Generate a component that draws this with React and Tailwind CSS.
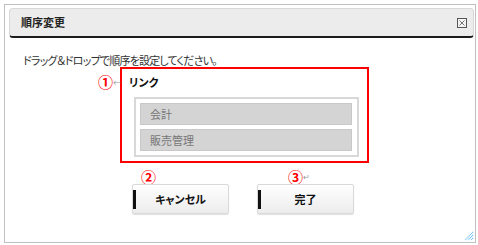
const items = ['会計', '販売管理']

function CloseIcon() {
  return (
    <svg width="10" height="10" viewBox="0 0 10 10" className="block">
      <rect x="0.5" y="0.5" width="9" height="9" fill="#f4f4f4" stroke="#555" />
      <path d="M2.5 2.5 L7.5 7.5 M7.5 2.5 L2.5 7.5" stroke="#666" strokeWidth="0.9" />
    </svg>
  )
}

function Grip() {
  return (
    <svg width="10" height="10" viewBox="0 0 10 10" className="block">
      <path d="M9 1 L1 9 M9 4 L4 9 M9 7 L7 9" stroke="#6cc0f2" strokeWidth="1.2" strokeDasharray="1 0.6" />
    </svg>
  )
}

function Button({ label }) {
  return (
    <button className="relative w-[97px] h-[30px] border border-[#d9d9d9] rounded-[2px] bg-gradient-to-b from-white to-[#ececec] shadow-[0_1px_1px_rgba(0,0,0,0.12)] text-[11px] font-bold text-[#111] flex items-center justify-center">
      <span className="absolute left-0 top-[5px] w-[3px] h-[19px] bg-[#111]" />
      {label}
    </button>
  )
}

export default function App() {
  return (
    <div className="w-[478px] h-[245px] bg-white pt-[4px] pl-[4px] font-['Noto_Sans_CJK_JP',sans-serif] [font-feature-settings:'palt']">
      <div className="relative w-[472px] h-[239px] border border-[#c0c0c0] flex flex-col">
        <div className="mt-[3px] ml-[4px] mr-[1px] h-[30px] rounded-[4px] bg-[#ececec] border border-[#d8d8d8] border-b-2 border-b-[#1c1c1c] flex items-center justify-between pl-[11px] pr-[6px]">
          <span className="text-[11px] font-bold text-[#222]">順序変更</span>
          <CloseIcon />
        </div>

        <p className="mt-[15px] pl-[18px] text-[11px] leading-[14px] tracking-[-0.8px] text-[#333]">
          ドラッグ＆ドロップで順序を設定してください。
        </p>

        <div className="relative ml-[115px] w-[249px] h-[96px] border-2 border-[#ff0000] pt-[6px] pl-[7px]">
          <span className="absolute left-[-24px] top-[6px] text-[15px] leading-[14px] font-bold text-[#ff0000]">①</span>
          <span className="absolute left-[-9px] top-[7px] text-[8px] leading-[14px] text-[#999]">←</span>
          <div className="text-[11px] leading-[14px] font-bold text-[#111]">リンク</div>
          <div className="mt-[8px] ml-[5px] w-[225px] h-[60px] border-2 border-[#d8d8d8] pt-[4px] pl-[4px] pr-[5px] flex flex-col gap-[4px]">
            {items.map((item) => (
              <div key={item} className="h-[22px] bg-[#d4d4d4] border border-[#c8c8c8] pl-[9px] flex items-center text-[11px] text-[#777]">
                {item}
              </div>
            ))}
          </div>
        </div>

        <div className="mt-[7px] ml-[127px] flex gap-[28px]">
          <div className="flex flex-col">
            <div className="h-[14px] pl-[9px] text-[15px] leading-[14px] font-bold text-[#ff0000]">②</div>
            <Button label="キャンセル" />
          </div>
          <div className="flex flex-col">
            <div className="h-[14px] pl-[31px] text-[15px] leading-[14px] font-bold text-[#ff0000]">
              ③<span className="text-[8px] font-normal text-[#999] align-top">↵</span>
            </div>
            <Button label="完了" />
          </div>
        </div>

        <div className="absolute right-[1px] bottom-[1px]">
          <Grip />
        </div>
      </div>
    </div>
  )
}
